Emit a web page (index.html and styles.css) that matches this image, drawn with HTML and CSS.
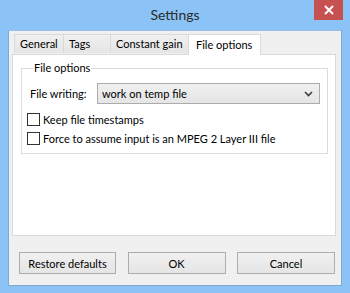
FILE: index.html
```html
<!DOCTYPE html>
<html lang="en">
<head>
  <meta charset="UTF-8">
  <title>Settings</title>
  <link rel="stylesheet" href="styles.css">
</head>
<body>
  <div class="window">
    <div class="titlebar">
      <span class="title">Settings</span>
      <button class="close-button" type="button">
        <svg width="10" height="10" viewBox="0 0 10 10">
          <path d="M1 1 L9 9 M9 1 L1 9" stroke="#fff" stroke-width="2"/>
        </svg>
      </button>
    </div>
    <div class="client">
      <div class="tabs">
        <div class="tab tab-general">General</div>
        <div class="tab tab-tags">Tags</div>
        <div class="tab tab-gain">Constant gain</div>
        <div class="tab tab-file selected">File options</div>
      </div>
      <div class="tab-panel">
        <fieldset class="group">
          <legend>File options</legend>
          <div class="field-row">
            <label class="field-label">File writing:</label>
            <div class="select">
              <span>work on temp file</span>
              <svg width="9" height="6" viewBox="0 0 9 6">
                <path d="M1 1 L4.5 4.5 L8 1" fill="none" stroke="#404040" stroke-width="1.6"/>
              </svg>
            </div>
          </div>
          <div class="check-row"><span class="checkbox"></span>Keep file timestamps</div>
          <div class="check-row"><span class="checkbox"></span>Force to assume input is an MPEG 2 Layer III file</div>
        </fieldset>
      </div>
      <div class="buttons">
        <button class="button" type="button">Restore defaults</button>
        <button class="button" type="button">OK</button>
        <button class="button" type="button">Cancel</button>
      </div>
    </div>
  </div>
</body>
</html>
```

FILE: styles.css
```css
body {
  margin: 0;
  padding: 0;
  font-family: Lato, 'Noto Sans', sans-serif;
  font-size: 11px;
  color: #000;
  background-color: #8cc3f6;
}
.window {
  width: 350px;
  height: 293px;
  display: flex;
  flex-direction: column;
  background-color: #8cc3f6;
}
.titlebar {
  height: 30px;
  display: flex;
  justify-content: center;
  position: relative;
}
.title {
  font-size: 14px;
  color: #2b2b2b;
  line-height: 30px;
}
.close-button {
  position: absolute;
  top: 0;
  right: 7px;
  width: 29px;
  height: 20px;
  padding: 0;
  border: none;
  background-color: #c75050;
  display: flex;
  align-items: center;
  justify-content: center;
}
.client {
  margin: 0 8px;
  height: 256px;
  box-sizing: border-box;
  border: 1px solid #83a8cf;
  border-top-color: #9bbfe4;
  background-color: #f0f0f0;
  padding: 3px 5px 0 3px;
}
.tabs {
  display: flex;
  height: 20px;
  padding-left: 2px;
  align-items: flex-end;
  position: relative;
  z-index: 1;
  white-space: nowrap;
}
.tab {
  box-sizing: border-box;
  height: 19px;
  border: 1px solid #d9d9d9;
  border-bottom: none;
  border-right: none;
  background: linear-gradient(#f0f0f0, #e5e5e5);
  padding-left: 5px;
  line-height: 17px;
  margin-bottom: 1px;
}
.tab-general { width: 49px; }
.tab-tags { width: 47px; }
.tab-gain { width: 78px; }
.tab.selected {
  width: 73px;
  height: 21px;
  margin-bottom: -1px;
  background: #fff;
  border-right: 1px solid #d9d9d9;
  padding-left: 7px;
  line-height: 19px;
}
.tab-panel {
  height: 182px;
  box-sizing: border-box;
  background-color: #fff;
  border: 1px solid #d9d9d9;
  padding: 6px 7px 0 8px;
}
.group {
  margin: 0;
  height: 93px;
  box-sizing: border-box;
  border: 1px solid #dcdcdc;
  padding: 8px 7px 0 5px;
}
.group legend {
  padding: 0 1px;
  margin-left: 6px;
  line-height: 14px;
}
.field-row {
  display: flex;
  align-items: center;
  height: 21px;
  margin-bottom: 6px;
}
.field-label {
  width: 67px;
  padding-left: 3px;
}
.select {
  flex: 1;
  height: 21px;
  box-sizing: border-box;
  border: 1px solid #acacac;
  background: linear-gradient(#f0f0f0, #e5e5e5);
  display: flex;
  align-items: center;
  justify-content: space-between;
  padding: 0 6px 0 4px;
}
.check-row {
  display: flex;
  align-items: center;
  height: 19px;
}
.checkbox {
  width: 11px;
  height: 11px;
  border: 1px solid #333;
  background: #fff;
  margin-right: 3px;
}
.buttons {
  display: flex;
  justify-content: space-between;
  padding: 16px 1px 0 7px;
}
.button {
  width: 98px;
  height: 22px;
  padding: 0;
  border: 1px solid #adadad;
  background: linear-gradient(#f0f0f0, #e5e5e5);
  font-family: Lato, 'Noto Sans', sans-serif;
  font-size: 11px;
  color: #000;
}
.button:first-child { width: 97px; }
```
